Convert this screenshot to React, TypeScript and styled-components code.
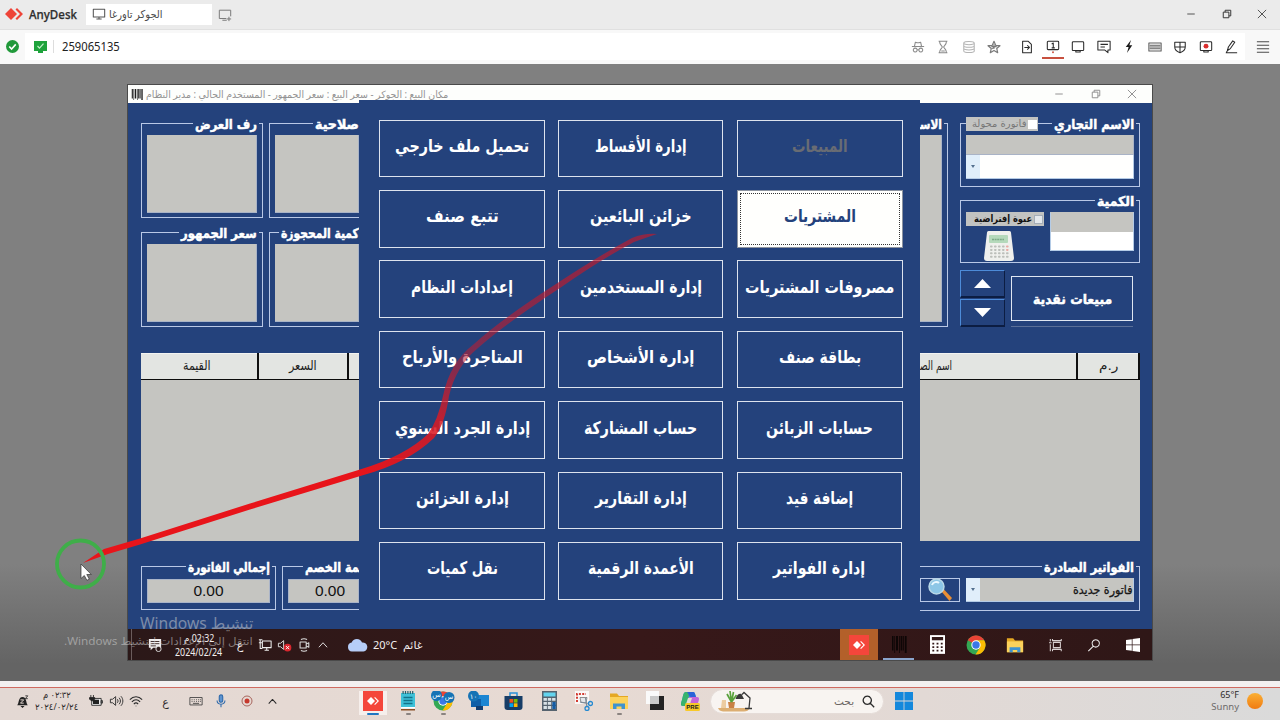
import React, { useLayoutEffect, useRef, useState } from "react";
import styled, { createGlobalStyle } from "styled-components";

const BLUE = "#24427c";
const GREY = "#c5c5c1";
const LINE = "#b9c8e6";

const GlobalStyle = createGlobalStyle`
  * { box-sizing: border-box; }
  body {
    margin: 0;
    overflow: hidden;
    font-family: "Noto Sans", "DejaVu Sans", sans-serif;
  }
  svg { display: block; flex: none; }
`;

/* ---------- text that keeps a fixed width ---------- */

const FitBox = styled.span<{ $w: number }>`
  display: block;
  flex: none;
  width: ${(p) => p.$w}px;
  direction: ltr;
`;

const FitText = styled.span<{ $rtl?: boolean }>`
  display: inline-block;
  white-space: nowrap;
  transform-origin: 0 50%;
  direction: ${(p) => (p.$rtl ? "rtl" : "ltr")};
`;

interface FitProps {
  w: number;
  rtl?: boolean;
  children: React.ReactNode;
}

function Fit({ w, rtl, children }: FitProps) {
  const ref = useRef<HTMLSpanElement>(null);
  const [scale, setScale] = useState(1);
  useLayoutEffect(() => {
    if (ref.current && ref.current.offsetWidth) {
      setScale(w / ref.current.offsetWidth);
    }
  }, [w]);
  return (
    <FitBox $w={w}>
      <FitText ref={ref} $rtl={rtl} style={{ transform: `scaleX(${scale})` }}>
        {children}
      </FitText>
    </FitBox>
  );
}

/* ---------- page frame ---------- */

const Screen = styled.div`
  position: relative;
  width: 1280px;
  height: 720px;
  display: flex;
  flex-direction: column;
  overflow: hidden;
`;

const TitleBar = styled.header`
  height: 30px;
  flex: none;
  display: flex;
  align-items: center;
  background: #ebebeb;
  border-bottom: 1px solid #e0e0e0;
  padding: 0 0 1px 5px;
`;

const Brand = styled.div`
  display: flex;
  align-items: center;
  gap: 6px;
  width: 81px;
  color: #2e2e2e;
  font-size: 12px;
  font-weight: 500;
  -webkit-text-stroke: 0.25px #2e2e2e;
`;

const SessionTab = styled.div`
  width: 126px;
  height: 21px;
  display: flex;
  align-items: center;
  gap: 3px;
  padding-left: 6px;
  background: #fff;
  color: #4a4a4a;
  font-size: 11px;
  line-height: 18px;
`;

const NewTab = styled.div`
  margin-left: 6px;
  padding-top: 2px;
`;

const WindowButtons = styled.div<{ $pitch: number }>`
  margin-left: auto;
  display: flex;
  align-items: center;

  > svg {
    margin-left: ${(p) => p.$pitch - 12}px;
  }
`;

const Toolbar = styled.nav`
  height: 34px;
  flex: none;
  display: flex;
  align-items: center;
  background: #f8f8f8;
  padding: 0 0 1px 6px;
`;

const AddressBar = styled.div`
  flex: 1;
  height: 27px;
  margin-left: 6px;
  padding: 0 1px 0 9px;
  background: #fff;
  display: flex;
  align-items: center;
  color: #222;
  font-size: 12px;
`;

const Divider = styled.i`
  width: 1px;
  height: 13px;
  background: #ddd;
  margin: 0 8px 0 6px;
`;

const Tools = styled.div`
  margin-left: auto;
  display: flex;
  height: 27px;
`;

const Tool = styled.span<{ $active?: boolean; $dim?: boolean; $after?: number }>`
  width: 25.5px;
  height: 27px;
  margin-right: ${(p) => p.$after || 0}px;
  display: flex;
  align-items: center;
  justify-content: center;
  opacity: ${(p) => (p.$dim ? 0.55 : 1)};

  &::after {
    content: "";
    flex: none;
    align-self: flex-end;
    width: 22px;
    height: 2px;
    margin: 0 -4px 1px -18px;
    background: ${(p) => (p.$active ? "#c8503f" : "transparent")};
  }
`;

const Stage = styled.main`
  height: 617px;
  flex: none;
  padding: 20px 127px 0;
  background: linear-gradient(#808080 0, #808080 500px, #646464 600px);
`;

/* ---------- remote window ---------- */

const Remote = styled.section`
  width: 1026px;
  height: 577px;
  border: 1px solid #4a4a4a;
  display: flex;
  flex-direction: column;
`;

const RemoteTitle = styled.div`
  height: 18px;
  flex: none;
  display: flex;
  align-items: center;
  gap: 3px;
  padding: 0 14px 0 3px;
  background: #fdfefc;
  color: #939393;
  font-size: 10px;
  line-height: 16px;
`;

const Client = styled.div`
  height: 526px;
  flex: none;
  display: grid;
  grid-template-columns: 231px 561px 232px;
  background: ${BLUE};
`;

const Side = styled.div<{ $right?: boolean }>`
  min-width: 0;
  overflow: hidden;
  display: flex;
  flex-direction: column;
  padding: ${(p) => (p.$right ? "20px 12px 0 0" : "20px 0 0 13px")};
`;

const Row = styled.div<{ $gap?: number; $top?: number; $left?: number }>`
  display: flex;
  flex: none;
  gap: ${(p) => p.$gap || 0}px;
  margin-top: ${(p) => p.$top || 0}px;
  padding-left: ${(p) => p.$left || 0}px;
`;

const Stack = styled.div<{ $gap?: number }>`
  display: flex;
  flex-direction: column;
  gap: ${(p) => p.$gap || 0}px;
`;

const Group = styled.div<{ $w: number; $h: number; $cut?: "left" | "right" }>`
  width: ${(p) => p.$w}px;
  height: ${(p) => p.$h}px;
  flex: none;
  display: flex;
  flex-direction: column;
  border: 1px solid ${LINE};
  ${(p) => (p.$cut ? `border-${p.$cut}: 0;` : "")}
  padding: 0 ${(p) => (p.$cut === "right" ? 0 : 5)}px 5px ${(p) => (p.$cut === "left" ? 0 : 5)}px;
`;

const GroupHead = styled.div<{ $cut?: boolean }>`
  height: 11px;
  flex: none;
  display: flex;
  align-items: flex-start;
  justify-content: flex-end;
  margin-right: ${(p) => (p.$cut ? 0 : -2)}px;
`;

const Legend = styled.div<{ $cut?: boolean }>`
  height: 20px;
  margin-top: -10px;
  padding: 0 ${(p) => (p.$cut ? 0 : 2)}px 0 2px;
  background: ${BLUE};
  color: #fff;
  font: bold 13.5px/20px "DejaVu Sans", sans-serif;
  -webkit-text-stroke: 0.5px #fff;
`;

const Panel = styled.div<{ $h: number }>`
  position: relative;
  height: ${(p) => p.$h}px;
  flex: none;
  background: ${GREY};
  border: 1px solid #a9b3c6;
  border-width: 0 1px 1px 0;
`;

const Check = styled.div<{ $w: number; $muted?: boolean }>`
  width: ${(p) => p.$w}px;
  height: 14px;
  flex: none;
  display: flex;
  align-items: center;
  justify-content: flex-end;
  gap: 2px;
  padding-right: 1px;
  background: #c2c3c1;
  color: ${(p) => (p.$muted ? "#777" : "#111")};
  font: ${(p) => (p.$muted ? "normal" : "bold")} 10px/12px "DejaVu Sans", sans-serif;

  > i {
    width: 9px;
    height: 9px;
    background: ${(p) => (p.$muted ? "#fff" : "#e4e8ec")};
    border: 1px solid ${(p) => (p.$muted ? "#fff" : "#a4adb8")};
  }
`;

const HeadCheck = styled.div`
  margin: -7px 14px 0 0;
`;

const Combo = styled.div<{ $h: number; $fill: string }>`
  height: ${(p) => p.$h}px;
  display: flex;
  align-items: center;
  background: ${(p) => p.$fill};
  border: 1px solid #b4cbe6;
  border-width: 0 1px 1px 0;
  color: #151515;
  font: 500 12px/20px "DejaVu Sans", sans-serif;
  -webkit-text-stroke: 0.3px #151515;

  > ${FitBox} {
    margin: 0 1px 0 auto;
  }
`;

const Arrow = styled.span`
  width: 14px;
  height: 100%;
  display: flex;
  align-items: center;
  justify-content: center;
  background: #e0eefa;

  &::after {
    content: "";
    border: 2px solid transparent;
    border-top: 3px solid #53708f;
    border-bottom: 0;
  }
`;

const ComboWide = styled.div`
  flex: 1;
`;

const Field = styled.div`
  width: 84px;
  height: 39px;
  border: 1px solid #b4cbe6;
  border-top-color: ${GREY};
  background: linear-gradient(${GREY} 19px, #fff 19px);
`;

const StepButton = styled.button`
  width: 45px;
  height: 28px;
  padding: 0;
  border: 1px solid #0c1d42;
  border-top-color: #4d8bd8;
  border-left-color: #4d8bd8;
  border-bottom-width: 2px;
  background: ${BLUE};
  display: flex;
  align-items: center;
  justify-content: center;
`;

const CashButton = styled.button`
  width: 122px;
  height: 45px;
  margin-top: 6px;
  padding: 1px 0 0;
  display: flex;
  align-items: center;
  justify-content: center;
  background: ${BLUE};
  border: 1px solid #dfe6f2;
  color: #fff;
  font: bold 13.5px/20px "DejaVu Sans", sans-serif;
  -webkit-text-stroke: 0.5px #fff;
`;

const Hairline = styled.i`
  height: 1px;
  margin-top: 5px;
  background: #5a6f98;
`;

const Table = styled.div`
  height: 188px;
  flex: none;
  background: ${GREY};
  margin-top: 26px;
`;

const TableHead = styled.div`
  height: 27px;
  display: flex;
  background: #e3e5e2;
  border-bottom: 1px solid #0c0c0c;
  box-shadow: inset 0 1px 0 #f2f3f1;
`;

const Th = styled.div<{ $w: number; $last?: boolean; $start?: boolean }>`
  width: ${(p) => p.$w}px;
  border-right: ${(p) => (p.$last ? 0 : 2)}px solid #101010;
  display: flex;
  align-items: center;
  justify-content: ${(p) => (p.$start ? "flex-start" : "center")};
  padding-right: ${(p) => (p.$w > 100 && !p.$start ? 4 : 0)}px;
  color: #1c1c1c;
  font: 13px/20px "DejaVu Sans", sans-serif;
`;

const Total = styled.div<{ $cut?: boolean }>`
  height: 24px;
  margin-top: 1px;
  padding-left: ${(p) => (p.$cut ? 13 : 0)}px;
  background: ${GREY};
  border: 1px solid #aab4c8;
  text-align: center;
  color: #111;
  font: 15.5px/21px "Liberation Sans", sans-serif;
`;

const FindButton = styled.div`
  width: 40px;
  height: 24px;
  margin-right: 6px;
  border: 1px solid ${LINE};
  display: flex;
  align-items: center;
  justify-content: center;
`;

/* ---------- main menu ---------- */

const Menu = styled.div`
  position: relative;
  margin-top: -3px;
  padding: 19.7px 0 0 20px;
  background: ${BLUE};
  display: grid;
  grid-template-columns: 166px 165px 166px;
  grid-auto-rows: 57.5px;
  row-gap: 12.9px;
  column-gap: 13.4px;
  align-content: start;
`;

const MenuButton = styled.button<{ $state?: string; $narrow?: boolean }>`
  padding: 0 0 5px;
  width: ${(p) => (p.$narrow ? "calc(100% - 1px)" : "100%")};
  display: flex;
  align-items: center;
  justify-content: center;
  border: ${(p) => (p.$state === "focus" ? "1px solid #8c93a0" : "1px solid #dde3ee")};
  background: ${(p) => (p.$state === "focus" ? "#fffffd" : BLUE)};
  outline: ${(p) => (p.$state === "focus" ? "1px dotted #333" : "none")};
  outline-offset: -4px;
  color: ${(p) => (p.$state === "focus" ? BLUE : p.$state === "off" ? "#696c73" : "#fff")};
  font: bold 17.5px/24px "DejaVu Sans", sans-serif;
`;

interface MenuItem {
  label: string;
  w: number;
  state?: string;
  narrow?: boolean;
}

const menu: MenuItem[] = [
  { label: "تحميل ملف خارجي", w: 134 },
  { label: "إدارة الأقساط", w: 92 },
  { label: "المبيعات", w: 56, state: "off" },
  { label: "تتبع صنف", w: 73 },
  { label: "خزائن البائعين", w: 102 },
  { label: "المشتريات", w: 72, state: "focus" },
  { label: "إعدادات النظام", w: 102 },
  { label: "إدارة المستخدمين", w: 122 },
  { label: "مصروفات المشتريات", w: 149 },
  { label: "المتاجرة والأرباح", w: 121 },
  { label: "إدارة الأشخاص", w: 107 },
  { label: "بطاقة صنف", w: 82 },
  { label: "إدارة الجرد السنوي", w: 135 },
  { label: "حساب المشاركة", w: 113 },
  { label: "حسابات الزبائن", w: 107 },
  { label: "إدارة الخزائن", w: 93 },
  { label: "إدارة التقارير", w: 92 },
  { label: "إضافة قيد", w: 67, narrow: true },
  { label: "نقل كميات", w: 71 },
  { label: "الأعمدة الرقمية", w: 106 },
  { label: "إدارة الفواتير", w: 92, narrow: true },
];

/* ---------- taskbars ---------- */

const RemoteTaskbar = styled.div`
  height: 31px;
  flex: none;
  display: flex;
  align-items: center;
  background: linear-gradient(90deg, #2b1818, #371819 50%, #2f1717);
  color: #f2eeee;
  padding-left: 3px;
`;

const Peek = styled.i`
  width: 1px;
  height: 31px;
  background: #6b5c5c;
`;

const Cell = styled.div<{ $w: number; $bg?: string; $line?: string }>`
  width: ${(p) => p.$w}px;
  height: 100%;
  flex: none;
  display: flex;
  align-items: center;
  justify-content: center;
  background: ${(p) => p.$bg || "transparent"};
  box-shadow: ${(p) => (p.$line ? `inset 0 -2px 0 ${p.$line}` : "none")};
  font-size: 11px;
`;

const Push = styled.i`
  margin-left: auto;
`;

const Clock = styled.div<{ $size: number; $lead: number }>`
  display: flex;
  flex-direction: column;
  align-items: center;
  font-size: ${(p) => p.$size}px;
  line-height: ${(p) => p.$lead}px;
`;

const Taskbar = styled.footer`
  height: 39px;
  flex: none;
  display: flex;
  align-items: center;
  border-top: 6px solid #f3f0f0;
  padding-bottom: 5px;
  background: linear-gradient(90deg, #e3d8d3, #e7dad3 45%, #e2d9d5 72%, #dadada);
  box-shadow: inset 0 1px 0 #cf6a60;
  color: #2d2a2a;
`;

const AppCell = styled.div<{ $open?: boolean; $mark?: string }>`
  width: 35.2px;
  height: 28px;
  flex: none;
  display: flex;
  flex-direction: column;
  align-items: center;
  padding-top: 4px;

  &::after {
    content: "";
    flex: none;
    width: ${(p) => (p.$open ? 12 : 5)}px;
    height: 2px;
    margin-top: 2px;
    border-radius: 1px;
    background: ${(p) => p.$mark || "transparent"};
  }

  > svg {
    box-shadow: ${(p) => (p.$open ? "-4px 0 0 #f6efec, 4px 0 0 #f6efec, 0 4px 0 #f6efec, -4px 4px 0 #f6efec, 4px 4px 0 #f6efec" : "none")};
  }
`;

const SearchPill = styled.div`
  width: 174px;
  height: 25px;
  margin: 0 11px 0 3px;
  padding: 0 8px 0 6px;
  border-radius: 13px;
  background: #f8f4f1;
  border: 1px solid #e5dcd8;
  display: flex;
  align-items: center;
  color: #6a6563;
  font-size: 10px;

  > ${FitBox} {
    margin: 0 8px 0 auto;
  }
`;

const Weather = styled.div`
  margin: 0 8px 0 auto;
  text-align: right;
  font-size: 9px;
  line-height: 12.5px;

  > small {
    display: block;
    font-size: 9.5px;
    color: #6d6a6a;
  }
`;

const Sun = styled.i`
  width: 16px;
  height: 16px;
  margin: 0 17px 0 0;
  border-radius: 50%;
  background: linear-gradient(#fbb034, #f07b12);
`;

/* ---------- overlays ---------- */

const Watermark = styled.div`
  position: absolute;
  left: 64px;
  top: 613px;
  width: 189px;
  display: flex;
  flex-direction: column;
  align-items: flex-end;
  color: rgba(215, 215, 215, 0.5);
  font-size: 15.5px;
  line-height: 20px;

  > :last-child {
    font-size: 11px;
    line-height: 16px;
  }
`;

const Ink = styled.svg`
  position: absolute;
  left: 0;
  top: 0;
`;

/* ---------- icons ---------- */

interface LineIconProps {
  d: string;
  size?: number;
  color?: string;
  width?: number;
  children?: React.ReactNode;
}

function LineIcon({ d, size = 14, color = "#2b2b2b", width = 1.2, children }: LineIconProps) {
  return (
    <svg width={size} height={size} viewBox="0 0 16 16" fill="none" stroke={color} strokeWidth={width} strokeLinejoin="round">
      <path d={d} />
      {children}
    </svg>
  );
}

const paths = {
  monitor: "M1.500 2.500h13v9h-13zM5 13.800h6M8 11.500v2",
  incognito: "M1 7.500h14M4 7l1-4.500 2 .7h2l2-.7L12 7M7 11.500c.6-.6 1.400-.6 2 0M4.800 9.300a2.200 2.200 0 1 0 .01 0M11.200 9.300a2.200 2.200 0 1 0 .01 0",
  hourglass: "M3 1.500h10M3 14.500h10M4 1.500c0 4 3.200 5 3.200 6.500S4 10.500 4 14.500M12 1.500c0 4-3.200 5-3.200 6.500s3.200 2.500 3.200 6.500M6 12.500h4",
  database: "M2 3.500c0-2.500 12-2.500 12 0v9c0 2.500-12 2.500-12 0zM2 3.500c0 2.500 12 2.500 12 0M2 6.500c0 2.500 12 2.500 12 0M2 9.500c0 2.500 12 2.500 12 0",
  star: "M8 1.500l1.900 4.600 4.900.4-3.700 3.200 1.100 4.800L8 12l-4.200 2.500 1.100-4.800L1.200 6.500l4.900-.4zM8 5v5M5 7.500h6M6 10l4-3",
  file: "M3 1.500h6.500L13 5v9.500H3zM5 8.500h5.500M8.300 6l2.500 2.500L8.300 11",
  screen: "M2.500 2h11q1 0 1 1v8q0 1-1 1h-11q-1 0-1-1V3q0-1 1-1zM5.500 12v1.800h5V12",
  chat: "M1 1.500h14v10H12.500V14.500L9 11.500H1zM4 5h8.500M4 8h5",
  shield: "M2 2.500h12V8c0 3.500-3 5.500-6 6.500-3-1-6-3-6-6.500zM8 2.500v12M2 8h12",
  pen: "M4 12l1-4 5-7 2.300 1.600-5 7.200zM2 14.500h13M4 12l-1.500 2.500",
  keyboard: "M1 4h14v8.500H1zM3 6.500h1M5.500 6.500h1M8 6.500h1M10.500 6.500h1M12.500 6.500h1M3 8.500h1M5.500 8.500h1M8 8.500h1M10.500 8.500h1M12.500 8.500h1M4.500 10.700h7",
  keyboardFull: "M1 3.500h14v9H1zM2 6h12M2 8h12M2 10h12",
  up: "M2.500 11L8 5l5.500 6",
  search: "M10 2a4.200 4.200 0 1 1-.01 0zM7 9.500L1.500 15",
  min: "M3 8h10",
  restore: "M3 5.500h7.500V13H3zM5.500 5.500V3H13v7.500h-2.500",
  close: "M2.500 2.500l11 11M13.500 2.500l-11 11",
};

function AnyDeskLogo({ size }: { size: number }) {
  return (
    <svg width={size} height={(size * 12) / 18} viewBox="0 0 18 12">
      <path d="M6 0l6 6-6 6-6-6z" fill="#ee4438" />
      <path d="M10.500 1.500L12 0l6 6-6 6-1.500-1.500L15 6z" fill="#ee4438" />
    </svg>
  );
}

function AnyDeskTile() {
  return (
    <svg width="20" height="20" viewBox="0 0 20 20">
      <rect width="20" height="20" fill="#f4463b" />
      <path d="M8 6l4 4-4 4-4-4z" fill="#fff" />
      <path d="M11.200 6.800l.8-.8 4 4-4 4-.8-.8 3.200-3.200z" fill="#fff" />
    </svg>
  );
}

function Barcode({ w, h, dim }: { w: number; h: number; dim?: boolean }) {
  return (
    <svg width={w} height={h} viewBox="0 0 16 14" preserveAspectRatio="none">
      <path
        d="M1 0h1.500v12H1zM3.300 0h.8v14h-.8zM5 0h2v12H5zM8 0h.8v14H8zM9.600 0h1.800v12H9.600zM12.200 0h.8v12h-.8zM13.800 0h1.800v14h-1.800z"
        fill={dim ? "#0d0606" : "#1d1d1d"}
      />
    </svg>
  );
}

function Chrome({ badges }: { badges?: boolean }) {
  return (
    <svg width={badges ? 24 : 20} height="20" viewBox={badges ? "-2 0 24 20" : "0 0 20 20"}>
      <circle cx="10" cy="10" r="9.500" fill="#34a853" />
      <path d="M10 10L1.800 5.200A9.500 9.500 0 0 1 18.200 5.200H10z" fill="#ea4335" />
      <path d="M10 5.200h8.200A9.500 9.500 0 0 1 9.500 19.500L14 12.500z" fill="#fbbc04" />
      <circle cx="10" cy="10" r="4.700" fill="#fff" />
      <circle cx="10" cy="10" r="3.700" fill="#3b78e7" />
      {badges && (
        <g fill="#1673b5">
          <circle cx="3.500" cy="4.500" r="5.500" />
          <circle cx="16" cy="6.500" r="5.500" />
          <g fill="#fff" fontSize="7" fontFamily="DejaVu Sans" textAnchor="middle">
            <text x="3.500" y="5.500">س</text>
            <text x="16" y="7.500">س</text>
          </g>
        </g>
      )}
    </svg>
  );
}

function Folder({ size }: { size: number }) {
  return (
    <svg width={size} height={size} viewBox="0 0 20 20">
      <path d="M1 2.500h7l2 2.500h9v13H1z" fill="#e5a823" />
      <path d="M1 6h18v12H1z" fill="#fcd25b" />
      <path d="M4 18v-5.500h12V18h-3.500v-2.500h-5V18z" fill="#3f93cf" />
    </svg>
  );
}

function WindowsLogo({ size, color }: { size: number; color: string }) {
  return (
    <svg width={size} height={size} viewBox="0 0 18 18" fill={color}>
      <path d="M0 0h8.600v8.600H0zM9.400 0H18v8.600H9.400zM0 9.400h8.600V18H0zM9.400 9.400H18V18H9.400z" />
    </svg>
  );
}

function WindowsTenLogo() {
  return (
    <svg width="14" height="14" viewBox="0 0 14 14" fill="#fff">
      <path d="M0 2l5.800-.8v5.400H0zM6.500 1L14 0v6.600H6.500zM0 7.300h5.800v5.400L0 12zM6.500 7.300H14V14l-7.500-1z" />
    </svg>
  );
}

function Volume({ color, muted }: { color: string; muted?: boolean }) {
  return (
    <svg width="15" height="14" viewBox="0 0 16 16" fill="none" stroke={color} strokeWidth="1.100">
      <path d="M1 6h2.500L7 3v10L3.500 10H1z" />
      {!muted && <path d="M9 6c1 1 1 3 0 4M11 4.300c2 2 2 5.400 0 7.400M13 2.500c3 3 3 8 0 11" />}
      {muted && <circle cx="11.500" cy="11" r="4.300" fill="#d9272e" stroke="none" />}
      {muted && <path d="M9.700 9.200l3.600 3.600M13.300 9.200l-3.600 3.600" stroke="#fff" />}
    </svg>
  );
}

function Magnifier() {
  return (
    <svg width="26" height="24" viewBox="0 0 26 24">
      <path d="M14.500 13.500l2.500-2 8 8.500-2.500 3z" fill="#e98f35" />
      <circle cx="9.500" cy="8.500" r="7.500" fill="#8cc6e6" stroke="#b9d8e6" strokeWidth="1.500" />
      <path d="M5 7c1-3 5-4 7-2" stroke="#e8f7ff" strokeWidth="2" fill="none" />
    </svg>
  );
}

function DeskCalculator() {
  const keys = [];
  for (let r = 0; r < 4; r++) {
    for (let c = 0; c < 5; c++) {
      keys.push(
        <rect key={r + "-" + c} x={6 + c * 4} y={14.5 + r * 3.4} width="2.600" height="2" rx="0.800"
          fill={c === 4 && r < 2 ? "#e9aaa5" : "#bcbfba"} />
      );
    }
  }
  return (
    <svg width="30" height="31" viewBox="0 0 30 31">
      <path d="M3 1.500Q3 0 4.500 0h21Q27 0 27 1.500L30 27q0 3-3 3H3q-3 0-3-3z" fill="#eff0ed" />
      <rect x="5" y="4" width="19" height="8" rx="1" fill="#b5d9bb" />
      <path d="M8 8.500h12" stroke="#7eaa88" strokeWidth="1.500" strokeDasharray="2 .6" />
      {keys}
    </svg>
  );
}

function PocketCalculator() {
  return (
    <svg width="15" height="19" viewBox="0 0 16 20">
      <path d="M0 0h16v20H0z" fill="#fff" />
      <path d="M2 2h12v3.500H2z" fill="#321919" />
      <path d="M2.500 9h11M2.500 12.800h11M2.500 16.500h11" stroke="#321919" strokeWidth="2" strokeDasharray="2 2.500" />
    </svg>
  );
}

function NotepadIcon() {
  return (
    <svg width="16" height="20" viewBox="0 0 16 20">
      <path d="M1 2h14v14H1z" fill="#3fc1d8" />
      <path d="M1 16h14v1.500H1z" fill="#fff" />
      <path d="M1 18h14v1.500H1z" fill="#8a4f25" />
      <path d="M2.500 1.500h11" stroke="#24616e" strokeWidth="3" strokeDasharray="1.200 1.200" />
      <path d="M3.500 6.500h9M3.500 9.500h9M3.500 12.500h9" stroke="#14738a" strokeWidth="1.300" />
    </svg>
  );
}

function RemotePcIcon() {
  return (
    <svg width="23" height="20" viewBox="0 0 23 20">
      <path d="M8 4h14v11H8z" fill="#1b85d2" />
      <path d="M4 8h10v8H4z" fill="#0f5fa8" />
      <path d="M9 15h7v4H9z" fill="#123f73" />
      <circle cx="6.500" cy="5" r="5.500" fill="#1673b5" />
      <text x="6.500" y="7.500" fill="#fff" fontSize="7" fontFamily="DejaVu Sans" textAnchor="middle">١٠</text>
    </svg>
  );
}

function StoreIcon() {
  return (
    <svg width="19" height="20" viewBox="0 0 19 20">
      <path d="M6 5V2h7v3" fill="none" stroke="#2b90d8" strokeWidth="1.500" />
      <path d="M.5 5h18v11q0 3-3 3h-12q-3 0-3-3z" fill="#173d67" />
      <path d="M5.500 8h3.700v3.700H5.500z" fill="#f25022" />
      <path d="M9.800 8h3.700v3.700H9.800z" fill="#7fba00" />
      <path d="M5.500 12.300h3.700V16H5.500z" fill="#00a4ef" />
      <path d="M9.800 12.300h3.700V16H9.800z" fill="#ffb900" />
    </svg>
  );
}

function CalcAppIcon() {
  return (
    <svg width="15" height="20" viewBox="0 0 15 20">
      <path d="M0 0h15v20H0z" fill="#56636f" />
      <path d="M1.500 1.500h12v4h-12z" fill="#63d4ee" />
      <path d="M1.500 8.300h12M1.500 12.300h12M1.500 16.500h12" stroke="#d9e1e6" strokeWidth="2.800" strokeDasharray="3.400 .9" />
      <path d="M10.300 11h3.400v7h-3.400z" fill="#155ca3" />
    </svg>
  );
}

function SnipIcon() {
  return (
    <svg width="18" height="20" viewBox="0 0 18 20">
      <path d="M0 0h14v13H0z" fill="#faf8f7" />
      <path d="M2 11V3h9" fill="none" stroke="#d33c32" strokeWidth="2" strokeDasharray="2 1.300" />
      <path d="M5 6.500h7l-1 5.500-5-.5z" fill="#e4e6ea" stroke="#777" strokeWidth=".8" />
      <path d="M5 11l9 1.500M10.500 7l1.500 9" stroke="#7d8b98" strokeWidth="1.200" />
      <circle cx="15.500" cy="12.500" r="2" fill="none" stroke="#2489d1" strokeWidth="1.300" />
      <circle cx="12" cy="17.500" r="2" fill="none" stroke="#2489d1" strokeWidth="1.300" />
    </svg>
  );
}

function TaskViewIcon() {
  return (
    <svg width="18" height="19" viewBox="0 0 18 19">
      <path d="M4 5h14v14H4z" fill="#232323" />
      <path d="M0 0h13v13H0z" fill="#fafafa" />
      <path d="M4 5h9v8H4z" fill="#c9c9c9" />
    </svg>
  );
}

function CopilotIcon() {
  return (
    <svg width="20" height="20" viewBox="0 0 20 20">
      <path d="M6 1h7c2 0 2 2 3 5H9L6 15H3c-3 0-2-3-1-6s1-8 4-8z" fill="#2c9be0" />
      <path d="M2 9c1-3 1-8 4-8h4L6 15H3c-3 0-2-3-1-6z" fill="#38b46d" />
      <path d="M9 6h8c3 0 2 3 1 6s-1 6-4 6H7z" fill="#c466d8" />
      <path d="M7 1h6c2 0 2 2 3 5h-5C9 6 9 3 7 1z" fill="#2a62d8" />
      <path d="M8 7h4l-2 6H6z" fill="#e6dad4" />
      <rect x="5" y="12" width="15" height="8" rx="1.500" fill="#f8c928" />
      <text x="12.500" y="18.300" fontSize="6" fontWeight="bold" fontFamily="Liberation Sans" textAnchor="middle" fill="#222">PRE</text>
    </svg>
  );
}

function LampArt() {
  return (
    <svg width="36" height="22" viewBox="0 0 36 22">
      <path d="M1 18h32q-2 3.500-6 3.500H6Q2 21 1 18z" fill="#dcae72" />
      <path d="M5 10h4v8H4z" fill="#eccba0" />
      <path d="M11 12h7l-1 6h-5z" fill="#c98145" />
      <path d="M14.500 12L10 4M14.500 12L13 1M14.500 12l2-10M14.500 12l5-7" stroke="#59a23c" strokeWidth="1.700" />
      <path d="M18.500 9q2-6 6-5l2.500 5z" fill="#3a3a3a" />
      <path d="M25 4.500l2-2 6 5.500-1 10M28 18.500h7" fill="none" stroke="#3a3a3a" strokeWidth="1.300" />
    </svg>
  );
}

/* ---------- app ---------- */

interface BoxProps {
  title: string;
  w: number;
  text: number;
  cut?: boolean;
}

function ValueBox({ title, w, text, cut }: BoxProps) {
  return (
    <Group $w={w} $h={95} $cut={cut ? "right" : undefined}>
      <GroupHead $cut={cut}>
        <Legend $cut={cut}><Fit w={text} rtl>{title}</Fit></Legend>
      </GroupHead>
      <Panel $h={78} />
    </Group>
  );
}

function TotalBox({ title, w, text, cut }: BoxProps) {
  return (
    <Group $w={w} $h={44} $cut={cut ? "right" : undefined}>
      <GroupHead $cut={cut}>
        <Legend $cut={cut}><Fit w={text} rtl>{title}</Fit></Legend>
      </GroupHead>
      <Total $cut={cut}>0.00</Total>
    </Group>
  );
}

function LeftSide() {
  return (
    <Side>
      <Row $gap={6}>
        <ValueBox title="رف العرض" w={122} text={62} />
        <ValueBox title="صلاحية" w={90} text={44} cut />
      </Row>
      <Row $gap={6} $top={14}>
        <ValueBox title="سعر الجمهور" w={122} text={76} />
        <ValueBox title="كمية المحجوزة" w={90} text={78} cut />
      </Row>
      <Table>
        <TableHead>
          <Th $w={118}><Fit w={28} rtl>القيمة</Fit></Th>
          <Th $w={90}><Fit w={28} rtl>السعر</Fit></Th>
          <Th $w={10} $last />
        </TableHead>
      </Table>
      <Row $gap={6} $top={25}>
        <TotalBox title="إجمالي الفاتورة" w={135} text={82} />
        <TotalBox title={"\u200Dمة الخصم"} w={77} text={54} cut />
      </Row>
    </Side>
  );
}

function RightSide() {
  return (
    <Side $right>
      <Row $gap={12}>
        <Group $w={28} $h={204} $cut="left">
          <GroupHead>
            <Legend><Fit w={22} rtl>{"الاس\u200D"}</Fit></Legend>
          </GroupHead>
          <Panel $h={187} />
        </Group>
        <Stack>
          <Group $w={180} $h={64}>
            <GroupHead>
              <HeadCheck>
                <Check $w={72} $muted><Fit w={54} rtl>فاتورة محولة</Fit><i /></Check>
              </HeadCheck>
              <Legend><Fit w={80} rtl>الاسم التجاري</Fit></Legend>
            </GroupHead>
            <Panel $h={20} />
            <Combo $h={24} $fill="#fffffe"><Arrow /></Combo>
          </Group>
          <Row $top={13}>
            <Group $w={180} $h={63}>
              <GroupHead>
                <Legend><Fit w={37} rtl>الكمية</Fit></Legend>
              </GroupHead>
              <Row $gap={6}>
                <Stack $gap={5}>
                  <Check $w={78}><Fit w={58} rtl>عبوة إفتراضية</Fit><i /></Check>
                  <Row $left={18}><DeskCalculator /></Row>
                </Stack>
                <Field />
              </Row>
            </Group>
          </Row>
          <Row $gap={6} $top={7}>
            <Stack $gap={1}>
              <StepButton>
                <svg width="17" height="9" viewBox="0 0 17 9"><path d="M8.500 0L17 9H0z" fill="#fff" /></svg>
              </StepButton>
              <StepButton>
                <svg width="17" height="9" viewBox="0 0 17 9"><path d="M8.500 9L17 0H0z" fill="#fff" /></svg>
              </StepButton>
            </Stack>
            <Stack>
              <CashButton><Fit w={79} rtl>مبيعات نقدية</Fit></CashButton>
              <Hairline />
            </Stack>
          </Row>
        </Stack>
      </Row>
      <Table>
        <TableHead>
          <Th $w={158} $start><Fit w={32} rtl>{"اسم الص\u200D"}</Fit></Th>
          <Th $w={62}><Fit w={19} rtl>ر.م</Fit></Th>
        </TableHead>
      </Table>
      <Row $top={25}>
        <Group $w={220} $h={45} $cut="left">
          <GroupHead>
            <Legend><Fit w={90} rtl>الفواتير الصادرة</Fit></Legend>
          </GroupHead>
          <Row>
            <FindButton><Magnifier /></FindButton>
            <ComboWide>
              <Combo $h={24} $fill={GREY}><Arrow /><Fit w={59} rtl>فاتورة جديدة</Fit></Combo>
            </ComboWide>
          </Row>
        </Group>
      </Row>
    </Side>
  );
}

export default function App() {
  return (
    <Screen>
      <GlobalStyle />
      <TitleBar>
        <Brand><AnyDeskLogo size={18} /><Fit w={48}>AnyDesk</Fit></Brand>
        <SessionTab>
          <LineIcon d={paths.monitor} size={14} color="#555" />
          <Fit w={54} rtl>الجوكر تاورغا</Fit>
        </SessionTab>
        <NewTab>
          <LineIcon d="M9.500 12H1.500V2.500h13v7M5 14h5M12.500 10v5M10 12.500h5" size={14} color="#777" width={1.1} />
        </NewTab>
        <WindowButtons $pitch={35.5}>
          <LineIcon d={paths.min} size={12} color="#444" />
          <LineIcon d={paths.restore} size={12} color="#333" width={1.3} />
          <LineIcon d={paths.close} size={12} color="#444" />
        </WindowButtons>
        <Cell $w={12} />
      </TitleBar>

      <Toolbar>
        <svg width="13" height="13" viewBox="0 0 14 14">
          <circle cx="7" cy="7" r="7" fill="#21993a" />
          <path d="M3.500 7l2.500 2.700 4.500-5" stroke="#fff" strokeWidth="1.700" fill="none" />
        </svg>
        <AddressBar>
          <svg width="13" height="12" viewBox="0 0 13 12">
            <path d="M0 0h13v10H0zM4 10h5v2H4z" fill="#1fa33c" />
            <path d="M3.500 5l2 2.200 4-4.500" stroke="#c6f1cd" strokeWidth="1.200" fill="none" />
          </svg>
          <Divider />
          <Fit w={58}>259065135</Fit>
          <Tools>
            <Tool $dim><LineIcon d={paths.incognito} /></Tool>
            <Tool $dim><LineIcon d={paths.hourglass} /></Tool>
            <Tool $dim><LineIcon d={paths.database} color="#777" /></Tool>
            <Tool $dim $after={7.5}><LineIcon d={paths.star} color="#111" width={1.4} /></Tool>
            <Tool><LineIcon d={paths.file} /></Tool>
            <Tool $active>
              <LineIcon d="M2.500 1.500h11q1 0 1 1v7.500q0 1-1 1h-11q-1 0-1-1V2.500q0-1 1-1zM6.500 4.500L8.300 3.500V9M6.500 9h3.600">
                <circle cx="8" cy="14" r="1.100" fill="#c8503f" stroke="none" />
              </LineIcon>
            </Tool>
            <Tool><LineIcon d={paths.screen} /></Tool>
            <Tool><LineIcon d={paths.chat} /></Tool>
            <Tool>
              <svg width="14" height="13" viewBox="0 0 16 16"><path d="M10.500 0L4 8.500h3.500L5.500 16 12 6.500H8.500z" fill="#1c1c1c" /></svg>
            </Tool>
            <Tool><LineIcon d={paths.keyboardFull} color="#5c5c5c" width={1.2} /></Tool>
            <Tool><LineIcon d={paths.shield} /></Tool>
            <Tool>
              <LineIcon d={paths.screen}><circle cx="8" cy="7" r="2.800" fill="#d92d2d" stroke="none" /></LineIcon>
            </Tool>
            <Tool><LineIcon d={paths.pen} /></Tool>
          </Tools>
        </AddressBar>
        <Cell $w={35}><LineIcon d="M1 2h14M1 6h14M1 10h14M1 14h14" size={14} color="#444" width={1.1} /></Cell>
      </Toolbar>

      <Stage>
        <Remote>
          <RemoteTitle>
            <Barcode w={12} h={11} />
            <Fit w={302} rtl>مكان البيع : الجوكر - سعر البيع : سعر الجمهور - المستخدم الحالي : مدير النظام</Fit>
            <WindowButtons $pitch={36.5}>
              <LineIcon d={paths.min} size={12} color="#888" />
              <LineIcon d={paths.restore} size={12} color="#888" />
              <LineIcon d={paths.close} size={12} color="#888" />
            </WindowButtons>
          </RemoteTitle>
          <Client>
            <LeftSide />
            <Menu>
              {menu.map((item) => (
                <MenuButton key={item.label} $state={item.state} $narrow={item.narrow}>
                  <Fit w={item.w} rtl>{item.label}</Fit>
                </MenuButton>
              ))}
            </Menu>
            <RightSide />
          </Client>
          <RemoteTaskbar>
            <Peek />
            <Cell $w={45}>
              <svg width="14" height="14" viewBox="0 0 16 16">
                <path d="M1 1h14v10H6l-3 3v-3H1z" fill="#f0eded" />
                <path d="M3 4h10M3 6.500h10M3 9h6" stroke="#2d1919" />
                <circle cx="12" cy="12.500" r="3" fill="#2d1919" stroke="#eee" />
              </svg>
            </Cell>
            <Cell $w={43}>
              <Clock $size={10} $lead={14}>
                <Fit w={30} rtl>02:32 م</Fit>
                <Fit w={47}>2024/02/24</Fit>
              </Clock>
            </Cell>
            <Cell $w={40}>ع</Cell>
            <Cell $w={10}><LineIcon d="M5 3.500h10v7.500H5zM7.500 14h5M10 11v3M1 2h4M1 5.500h4M2.500 2v10H5" color="#eee" /></Cell>
            <Cell $w={28}><Volume color="#ddd" muted /></Cell>
            <Cell $w={11}><LineIcon d="M3.500 4.500h7v7h-7zM10.500 7l3-1.500v5l-3-1.500M4.500 1.800c2-1 5-1 7 0M4.500 14.200c2 1 5 1 7 0" color="#ddd" /></Cell>
            <Cell $w={28}><LineIcon d={paths.up} size={12} color="#eee" /></Cell>
            <Cell $w={41}>
              <svg width="21" height="14" viewBox="0 0 21 14">
                <path d="M5 13.500a4.500 4.500 0 0 1-.3-8.900A5.500 5.500 0 0 1 15 4.500a4.500 4.500 0 0 1 1.500 9z" fill="#b6cdf8" />
              </svg>
            </Cell>
            <Cell $w={14}><Fit w={24}>20°C</Fit></Cell>
            <Cell $w={42}><Fit w={20} rtl>غائم</Fit></Cell>
            <Push />
            <Cell $w={38} $bg="#b3602a"><AnyDeskTile /></Cell>
            <Cell $w={5} />
            <Cell $w={31} $line="#8ba5cc"><Barcode w={16} h={17} dim /></Cell>
            <Cell $w={46}><PocketCalculator /></Cell>
            <Cell $w={32}><Chrome /></Cell>
            <Cell $w={45}><Folder size={18} /></Cell>
            <Cell $w={38}>
              <LineIcon d="M5 5h8v6H5zM4 1v2h10V1M4 15v-2h10v2M1.500 1v3M1.500 7v8M0 5.500h3" color="#d8d0d0" />
            </Cell>
            <Cell $w={38}><LineIcon d={paths.search} color="#eee" /></Cell>
            <Cell $w={39}><WindowsTenLogo /></Cell>
          </RemoteTaskbar>
        </Remote>
      </Stage>

      <Taskbar>
        <Cell $w={15} />
        <Cell $w={15}>
          <svg width="13" height="13" viewBox="0 0 16 16">
            <path d="M1.500 12.500c2.500-2 1-10 6.500-10s4 8 6.500 10zM5.500 13.500h5L8 16z" fill="#222" />
            <path d="M5.500 6h4l-4 4h4" stroke="#e6dad4" strokeWidth="1.200" fill="none" />
            <path d="M11.500 1h3l-3 3.500h3" stroke="#222" strokeWidth="1" fill="none" />
          </svg>
        </Cell>
        <Cell $w={53}>
          <Clock $size={9} $lead={12.5}>
            <Fit w={28} rtl>٠٢:٣٢ م</Fit>
            <Fit w={43}>٢٠٢٤/٠٢/٢٤</Fit>
          </Clock>
        </Cell>
        <Cell $w={26}>
          <svg width="14" height="12" viewBox="0 0 16 14">
            <path d="M3 4h11v8H3zM14 6.500h1.500v3H14z" fill="#eee" stroke="#222" />
            <path d="M4.500 5.500h7v5h-7z" fill="#222" />
            <path d="M2 0v3M5 0v3M.5 3h6v2L3.500 7 .5 5z" fill="#222" stroke="#222" />
          </svg>
        </Cell>
        <Cell $w={14}><Volume color="#333" /></Cell>
        <Cell $w={25}><LineIcon d="M1 6.500c4-4.500 10-4.500 14 0M3.300 9c3-3.200 6.500-3.200 9.400 0M5.500 11.500c1.700-1.700 3.300-1.700 5 0M8 13.500v.5" width={1.3} /></Cell>
        <Cell $w={35}>ع</Cell>
        <Cell $w={26}><LineIcon d={paths.keyboard} color="#444" width={1} /></Cell>
        <Cell $w={24}>
          <LineIcon d="M3.500 7.500c0 5.500 9 5.500 9 0M8 11.800V15" color="#2b67aa">
            <rect x="6" y="1" width="4" height="8.500" rx="2" fill="#5d93cf" />
          </LineIcon>
        </Cell>
        <Cell $w={28}>
          <svg width="12" height="12" viewBox="0 0 12 12">
            <circle cx="6" cy="6" r="5" fill="none" stroke="#a8655d" />
            <circle cx="6" cy="6" r="2.500" fill="#c6382c" />
          </svg>
        </Cell>
        <Cell $w={22}><LineIcon d={paths.up} size={11} width={1.5} /></Cell>
        <Cell $w={72.5} />
        <AppCell $open $mark="#2076c2"><AnyDeskTile /></AppCell>
        <AppCell $mark="#8a8380"><NotepadIcon /></AppCell>
        <AppCell $mark="#8a8380"><Chrome badges /></AppCell>
        <AppCell><RemotePcIcon /></AppCell>
        <AppCell><StoreIcon /></AppCell>
        <AppCell><CalcAppIcon /></AppCell>
        <AppCell><SnipIcon /></AppCell>
        <AppCell $mark="#8a8380"><Folder size={20} /></AppCell>
        <AppCell><TaskViewIcon /></AppCell>
        <AppCell><CopilotIcon /></AppCell>
        <SearchPill>
          <LampArt />
          <Fit w={20} rtl>بحث</Fit>
          <LineIcon d="M6.500 1.500a5 5 0 1 1-.01 0zM10.200 10.200L15 15" size={13} width={1.6} />
        </SearchPill>
        <WindowsLogo size={18} color="#1488dc" />
        <Weather>65°F<small>Sunny</small></Weather>
        <Sun />
      </Taskbar>

      <Watermark>
        <Fit w={113} rtl>تنشيط Windows</Fit>
        <Fit w={189} rtl>انتقل إلى الإعدادات لتنشيط Windows.</Fit>
      </Watermark>

      <Ink width="1280" height="720" viewBox="0 0 1280 720">
        <defs>
          <linearGradient id="trail" gradientUnits="userSpaceOnUse" x1="360" y1="480" x2="560" y2="280">
            <stop offset="0" stopColor="#e8141a" />
            <stop offset="0.350" stopColor="#d81a24" stopOpacity="0.850" />
            <stop offset="0.550" stopColor="#c01c30" stopOpacity="0.550" />
            <stop offset="1" stopColor="#b81c30" stopOpacity="0.700" />
          </linearGradient>
        </defs>
        <path
          d="M83 563L104 549L140 538.500L250 503.500L360 469.500Q405 456 428 434Q438 420 443 396Q450 362 474 344Q500 320 556 284Q600 255 632 238Q645 233 657 234Q645 238 634 242Q600 260 560 288Q505 324 478 348Q456 366 449 396Q445 424 434 438Q408 463 362 475.500L250 509.500L140 544.500L108 554Z"
          fill="url(#trail)"
        />
        <circle cx="80.500" cy="564" r="23.500" fill="none" stroke="#3fae49" strokeWidth="3.800" />
        <path d="M81 564v14.500l3.300-3 2.600 4.800 2.400-1.100-2.500-4.700h4.500z" fill="#fff" stroke="#333" strokeWidth=".7" />
      </Ink>
    </Screen>
  );
}
